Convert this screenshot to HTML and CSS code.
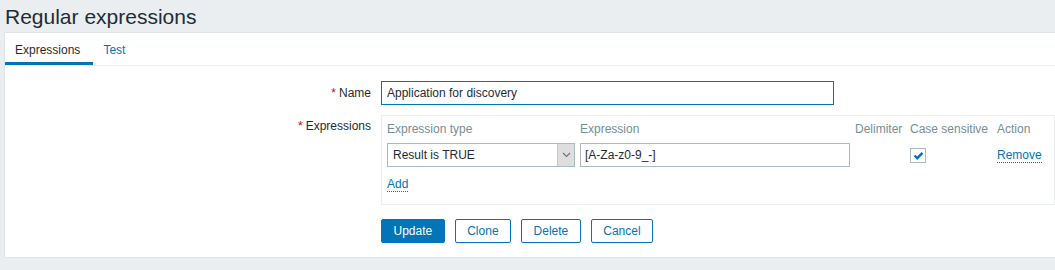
FILE: index.html
```html
<!DOCTYPE html>
<html lang="en">
<head>
  <meta charset="UTF-8" />
  <title>Regular expressions</title>
  <link rel="stylesheet" href="styles.css">
</head>
<body>
  <header class="page-header">
    <h1>Regular expressions</h1>
  </header>

  <main class="panel">
    <nav class="tabs">
      <a class="tab active">Expressions</a>
      <a class="tab">Test</a>
    </nav>

    <form class="form">
      <label class="form-label"><span class="req">*</span>Name</label>
      <div class="form-field">
        <input class="text-input name-input" type="text" value="Application for discovery">
      </div>

      <label class="form-label label-top"><span class="req">*</span>Expressions</label>
      <div class="form-field">
        <div class="expr-box">
          <div class="expr-grid">
            <div class="col-head">Expression type</div>
            <div class="col-head">Expression</div>
            <div class="col-head">Delimiter</div>
            <div class="col-head">Case sensitive</div>
            <div class="col-head">Action</div>

            <div class="select">
              <span class="select-value">Result is TRUE</span>
              <span class="select-arrow">
                <svg width="9" height="6" viewBox="0 0 9 6"><polyline points="1,1 4.5,4.5 8,1" fill="none" stroke="#6b7780" stroke-width="1.2"/></svg>
              </span>
            </div>
            <input class="text-input expr-input" type="text" value="[A-Za-z0-9_-]">
            <div class="cell"></div>
            <div class="cell">
              <span class="checkbox">
                <svg width="11" height="9" viewBox="0 0 11 9"><polyline points="1.5,4.5 4.2,7.2 9.5,1.8" fill="none" stroke="#0275b8" stroke-width="2.4"/></svg>
              </span>
            </div>
            <div class="cell"><a class="link">Remove</a></div>
          </div>
          <div class="add-row"><a class="link">Add</a></div>
        </div>
      </div>

      <div></div>
      <div class="buttons">
        <button type="button" class="btn btn-primary">Update</button>
        <button type="button" class="btn">Clone</button>
        <button type="button" class="btn">Delete</button>
        <button type="button" class="btn">Cancel</button>
      </div>
    </form>
  </main>
</body>
</html>
```

FILE: styles.css
```css
html, body {
  margin: 0;
  padding: 0;
  height: 100%;
  overflow: hidden;
}

body {
  background: #ebeef0;
  color: #1f2c33;
  font-family: "Liberation Sans", Arial, sans-serif;
  font-size: 12px;
  line-height: 16px;
}

.page-header h1 {
  margin: 0;
  padding: 5px 5px 3px;
  font-size: 21px;
  line-height: 24px;
  font-weight: normal;
  color: #1f2c33;
}

.panel {
  margin: 0 -10px 0 4px;
  background: #ffffff;
  border: 1px solid #dfe4e7;
}

.tabs {
  display: flex;
  border-bottom: 1px solid #ebeef0;
}

.tab {
  padding: 9px 13px 4px 10px;
  border-bottom: 3px solid transparent;
  color: #0275b8;
  cursor: pointer;
}

.tab.active {
  color: #1f2c33;
  border-bottom-color: #0275b8;
}

.form {
  display: grid;
  grid-template-columns: 376px 1fr;
  row-gap: 10px;
  padding: 15px 0 14px;
}

.form-label {
  text-align: right;
  padding-right: 10px;
  line-height: 24px;
}

.form-label.label-top {
  line-height: 16px;
  padding-top: 3px;
}

.req {
  color: #d40000;
  margin-right: 3px;
}

.text-input {
  box-sizing: border-box;
  height: 24px;
  margin: 0;
  padding: 0 5px;
  border: 1px solid #acbbc2;
  background: #ffffff;
  color: #1f2c33;
  font-family: inherit;
  font-size: 12px;
  outline: none;
}

.name-input {
  width: 453px;
  border-color: #0275b8;
}

.expr-box {
  box-sizing: border-box;
  width: 674px;
  padding: 5px 5px 12px;
  border: 1px solid #ebeef0;
}

.expr-grid {
  display: grid;
  grid-template-columns: 188px 270px 50px 82px 1fr;
  column-gap: 5px;
  row-gap: 6px;
  align-items: center;
}

.col-head {
  color: #768d99;
  white-space: nowrap;
}

.select {
  box-sizing: border-box;
  display: flex;
  height: 24px;
  border: 1px solid #acbbc2;
  background: #ffffff;
}

.select-value {
  flex: 1;
  padding-left: 5px;
  line-height: 22px;
}

.select-arrow {
  width: 16px;
  display: flex;
  align-items: center;
  justify-content: center;
  background: #dedede;
  border-left: 1px solid #c4c9cc;
}

.expr-input {
  width: 270px;
  padding: 0 4px;
}

.checkbox {
  box-sizing: border-box;
  display: flex;
  align-items: center;
  justify-content: center;
  width: 16px;
  height: 15px;
  border: 1px solid #acbbc2;
  background: #ffffff;
}

.link {
  color: #0275b8;
  text-decoration: none;
  border-bottom: 1px dotted #0275b8;
  cursor: pointer;
}

.add-row {
  margin-top: 9px;
}

.buttons {
  display: flex;
  gap: 10px;
  padding-top: 4px;
}

.btn {
  height: 24px;
  margin: 0;
  padding: 0 11.5px;
  border: 1px solid #0275b8;
  border-radius: 2px;
  background: #ffffff;
  color: #0275b8;
  font-family: inherit;
  font-size: 12px;
  cursor: pointer;
}

.btn-primary {
  background: #0275b8;
  color: #ffffff;
}
```
